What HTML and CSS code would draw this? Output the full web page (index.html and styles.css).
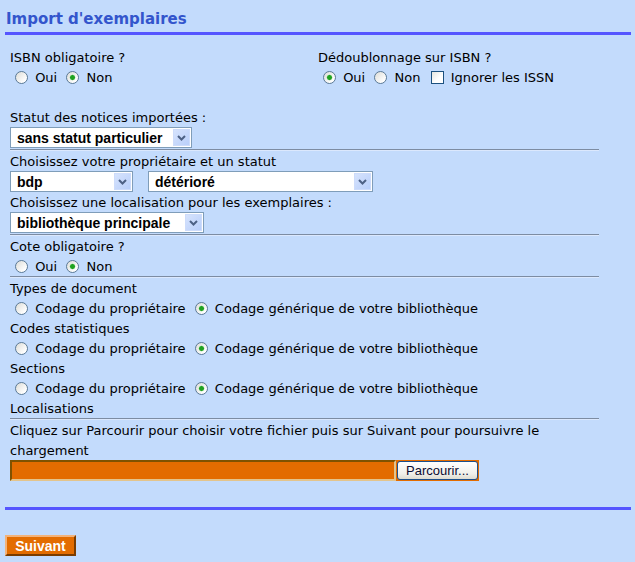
FILE: index.html
```html
<!DOCTYPE html>
<html lang="fr">
<head>
<meta charset="utf-8">
<title>Import d'exemplaires</title>
<link rel="stylesheet" href="styles.css">
</head>
<body>
<div class="page">
  <h1 class="title">Import d'exemplaires</h1>
  <div class="rule"></div>

  <form class="form">
    <div class="cols">
      <div>
        <div class="line">ISBN obligatoire ?</div>
        <div class="line"><input type="radio" name="isbn" class="radio"> Oui <input type="radio" name="isbn" class="radio" checked> Non</div>
      </div>
      <div>
        <div class="line">Dédoublonnage sur ISBN ?</div>
        <div class="line"><input type="radio" name="dedup" class="radio" checked> Oui <input type="radio" name="dedup" class="radio"> Non <input type="checkbox" class="check"> Ignorer les ISSN</div>
      </div>
    </div>
    <div class="line"></div>

    <div class="line">Statut des notices importées :</div>
    <div class="selects">
      <div class="select w-statut"><span>sans statut particulier</span><span class="arrow"><svg width="9" height="6" viewBox="0 0 9 6"><path d="M1 1 L4.5 4.5 L8 1" fill="none" stroke="#4d6185" stroke-width="2"/></svg></span></div>
    </div>
    <div class="sep"></div>

    <div class="line">Choisissez votre propriétaire et un statut</div>
    <div class="selects">
      <div class="select w-bdp"><span>bdp</span><span class="arrow"><svg width="9" height="6" viewBox="0 0 9 6"><path d="M1 1 L4.5 4.5 L8 1" fill="none" stroke="#4d6185" stroke-width="2"/></svg></span></div>
      <div class="select w-etat"><span>détérioré</span><span class="arrow"><svg width="9" height="6" viewBox="0 0 9 6"><path d="M1 1 L4.5 4.5 L8 1" fill="none" stroke="#4d6185" stroke-width="2"/></svg></span></div>
    </div>

    <div class="line">Choisissez une localisation pour les exemplaires :</div>
    <div class="selects">
      <div class="select w-loc"><span>bibliothèque principale</span><span class="arrow"><svg width="9" height="6" viewBox="0 0 9 6"><path d="M1 1 L4.5 4.5 L8 1" fill="none" stroke="#4d6185" stroke-width="2"/></svg></span></div>
    </div>
    <div class="sep"></div>

    <div class="line">Cote obligatoire ?</div>
    <div class="line"><input type="radio" name="cote" class="radio"> Oui <input type="radio" name="cote" class="radio" checked> Non</div>
    <div class="sep sep-tight"></div>

    <div class="line">Types de document</div>
    <div class="line"><input type="radio" name="typdoc" class="radio"> Codage du propriétaire <input type="radio" name="typdoc" class="radio" checked> Codage générique de votre bibliothèque</div>
    <div class="line">Codes statistiques</div>
    <div class="line"><input type="radio" name="codestat" class="radio"> Codage du propriétaire <input type="radio" name="codestat" class="radio" checked> Codage générique de votre bibliothèque</div>
    <div class="line">Sections</div>
    <div class="line"><input type="radio" name="section" class="radio"> Codage du propriétaire <input type="radio" name="section" class="radio" checked> Codage générique de votre bibliothèque</div>
    <div class="line">Localisations</div>
    <div class="sep sep-tight"></div>

    <div class="line">Cliquez sur Parcourir pour choisir votre fichier puis sur Suivant pour poursuivre le</div>
    <div class="line">chargement</div>
    <div class="file">
      <div class="file-field"></div>
      <div class="file-btn"><span class="file-btn-inner">Parcourir...</span></div>
    </div>
  </form>

  <div class="rule rule-bottom"></div>
  <button type="button" class="submit">Suivant</button>
</div>
</body>
</html>
```

FILE: styles.css
```css
html, body {
  margin: 0;
  padding: 0;
  background: #c3dbfc;
}

body {
  font-family: "DejaVu Sans", Verdana, sans-serif;
  font-size: 13px;
  color: #000;
}

.page {
  padding: 0 4px 0 5px;
}

.title {
  margin: 0;
  padding: 9px 0 0 1px;
  height: 19px;
  line-height: 20px;
  font-size: 15px;
  font-weight: bold;
  color: #3355cc;
}

.rule {
  margin-top: 4px;
  height: 3px;
  background: #5555ff;
}

.form {
  margin: 12px 0 0 5px;
  width: 589px;
}

.cols {
  display: grid;
  grid-template-columns: 308px 1fr;
  width: 620px;
}

.line {
  height: 20px;
  line-height: 22px;
  white-space: nowrap;
}

.radio, .check {
  -webkit-appearance: none;
  appearance: none;
  width: 13px;
  height: 13px;
  margin: 0 3px 0 5px;
  padding: 0;
  vertical-align: -2px;
  box-sizing: border-box;
  border: 1px solid #1c5180;
  background: linear-gradient(135deg, #dcdcd7 0%, #ffffff 80%);
}

.radio {
  border-radius: 50%;
  border-color: #5b7a96;
}

.radio:checked {
  background:
    radial-gradient(circle at 50% 50%, #21a121 0, #21a121 2px, #8fd88f 2.6px, transparent 3.2px),
    linear-gradient(135deg, #dcdcd7 0%, #ffffff 80%);
}

.check {
  margin-left: 6px;
  border-color: #1c5180;
  background: linear-gradient(135deg, #e4e4de 0%, #ffffff 60%);
}

.selects {
  display: flex;
  gap: 15px;
  height: 21px;
}

.select {
  box-sizing: border-box;
  height: 21px;
  display: flex;
  align-items: center;
  justify-content: space-between;
  padding: 0 1px 0 6px;
  border: 1px solid #7f9db9;
  background: #fff;
  font-family: "Liberation Sans", Arial, sans-serif;
  font-weight: bold;
  font-size: 14px;
}

.w-statut { width: 182px; }
.w-bdp { width: 123px; }
.w-etat { width: 225px; }
.w-loc { width: 194px; }

.arrow {
  width: 17px;
  height: 17px;
  display: flex;
  align-items: center;
  justify-content: center;
  background: linear-gradient(135deg, #d6e3fd 0%, #b9cffa 100%);
  border: 1px solid #cddcfb;
  box-sizing: border-box;
}

.sep {
  margin-top: 1px;
  height: 0;
  border-top: 1px solid #7d8ca2;
  border-bottom: 1px solid #dbe8fd;
}

.sep-tight {
  margin-top: 0;
}

.file {
  display: flex;
  height: 21px;
}

.file-field {
  box-sizing: border-box;
  width: 386px;
  height: 21px;
  background: #e36c00;
  border: 2px solid;
  border-color: #7f5200 #e3c48c #e3c48c #7f5200;
}

.file-btn {
  box-sizing: border-box;
  width: 83px;
  height: 21px;
  padding: 1px;
  background: #e36c00;
  display: flex;
}

.file-btn-inner {
  flex: 1;
  display: flex;
  align-items: center;
  justify-content: center;
  border: 1px solid #1c4f8c;
  border-radius: 3px;
  background: linear-gradient(#ffffff, #f0efea 70%, #dedbd0);
  font-family: "Liberation Sans", Arial, sans-serif;
  font-size: 13px;
  color: #0a0a30;
}

.rule-bottom {
  margin-top: 26px;
}

.submit {
  margin: 25px 0 0 0;
  box-sizing: border-box;
  width: 71px;
  height: 21px;
  padding: 0;
  border: 2px solid;
  border-color: #f2b27a #7a3c00 #7a3c00 #f2b27a;
  background: #e36c00;
  color: #fff;
  font-family: "Liberation Sans", Arial, sans-serif;
  font-weight: bold;
  font-size: 14px;
  display: block;
}
```
